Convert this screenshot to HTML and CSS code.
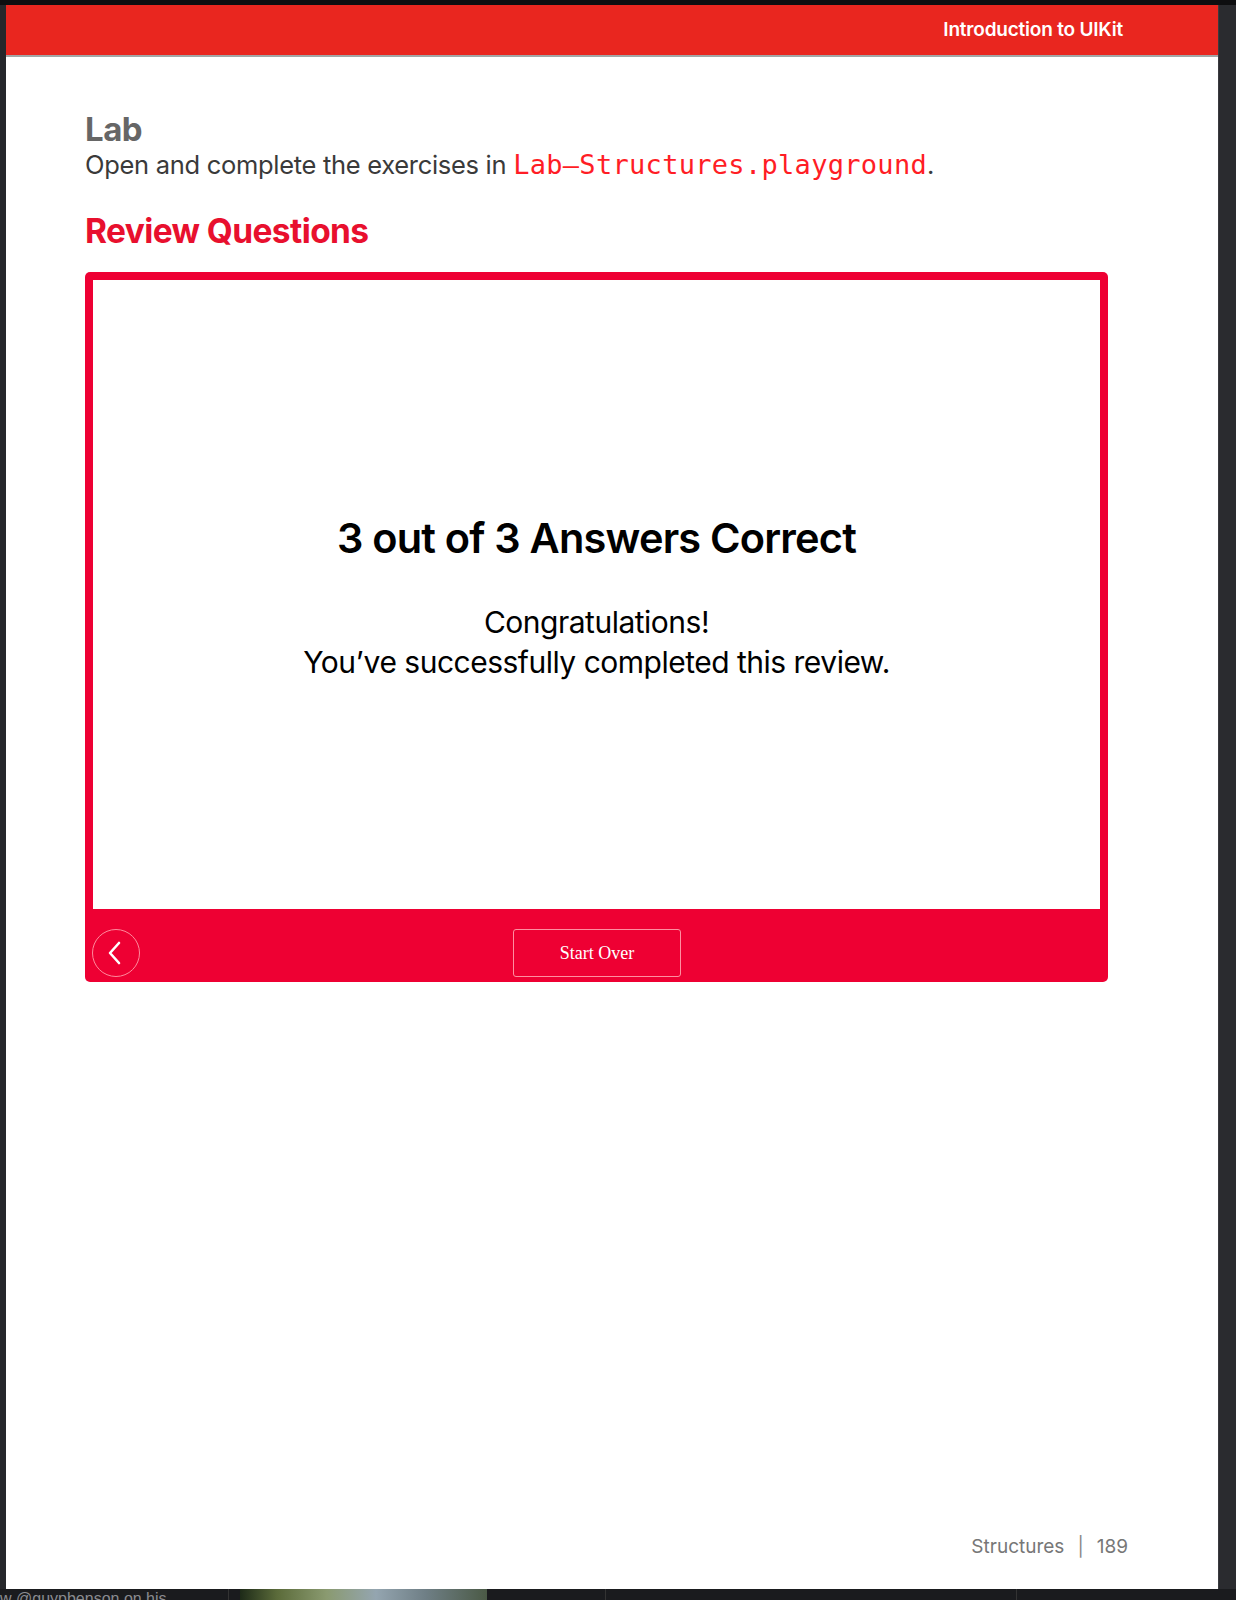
FILE: index.html
```html
<!DOCTYPE html>
<html lang="en">
<head>
<meta charset="utf-8">
<title>Structures - Review Questions</title>
<link rel="stylesheet" href="styles.css">
</head>
<body>
<div class="frame">
  <div class="topstrip"></div>
  <div class="middle">
    <div class="side-left"></div>
    <div class="page">
      <header class="page-header">
        <span class="header-title">Introduction to UIKit</span>
      </header>
      <main class="content">
        <h2 class="lab-title">Lab</h2>
        <p class="lab-text">Open and complete the exercises in <code class="code">Lab—Structures.playground</code>.</p>
        <h2 class="review-title">Review Questions</h2>
        <section class="quiz">
          <div class="quiz-body">
            <div class="score">3 out of 3 Answers Correct</div>
            <div class="message">Congratulations!<br>You’ve successfully completed this review.</div>
          </div>
          <div class="quiz-footer">
            <button class="back-btn" aria-label="Back">
              <svg width="20" height="24" viewBox="0 0 20 24"><path d="M14 2 L5 12 L14 22" fill="none" stroke="#fff" stroke-width="2.6" stroke-linecap="round" stroke-linejoin="round"/></svg>
            </button>
            <button class="start-btn">Start Over</button>
            <div class="spacer"></div>
          </div>
        </section>
      </main>
      <footer class="page-footer">
        <span>Structures</span><span class="sep">|</span><span>189</span>
      </footer>
    </div>
    <div class="side-right"></div>
  </div>
  <div class="bottombar">
    <span class="caption">w @guypbenson on his</span>
    <span class="divider"></span>
    <span class="thumb"></span>
    <span class="divider d2"></span>
    <span class="divider d3"></span>
  </div>
</div>
</body>
</html>
```

FILE: styles.css
```css
* { box-sizing: border-box; }
html, body { margin: 0; padding: 0; }
body {
  background: #1c1d20;
  font-family: "Inter", "Noto Sans", "Liberation Sans", sans-serif;
  width: 1236px;
  height: 1600px;
  overflow: hidden;
}
.frame {
  display: flex;
  flex-direction: column;
  height: 1600px;
}
.topstrip {
  height: 5px;
  background: #0e0e10;
}
.middle {
  display: flex;
  height: 1584px;
}
.side-left {
  width: 6px;
  background: #26272b;
}
.side-right {
  width: 18px;
  background: #2a2b2f;
  border-left: 1px solid #3a3b3f;
}
.page {
  width: 1212px;
  background: #fff;
  display: flex;
  flex-direction: column;
}
.page-header {
  height: 52px;
  background: #e9261f;
  border-bottom: 2px solid #a2a6a6;
  display: flex;
  align-items: center;
  justify-content: flex-end;
  padding: 0 95px 2px 0;
}
.header-title {
  color: #fff;
  font-weight: 600;
  font-size: 19px;
  letter-spacing: -0.2px;
}
.content {
  padding: 52px 0 0 79px;
  flex: 1;
}
.lab-title {
  margin: 0;
  font-size: 33px;
  font-weight: 700;
  color: #666;
  line-height: 40px;
  letter-spacing: -0.5px;
}
.lab-text {
  margin: 0;
  font-size: 25.5px;
  color: #3a3a3a;
  line-height: 32px;
  letter-spacing: -0.3px;
}
.code {
  font-family: "DejaVu Sans Mono", "Liberation Mono", monospace;
  color: #ff1d25;
  font-size: 27px;
  letter-spacing: 0.3px;
}
.review-title {
  margin: 30px 0 0;
  font-size: 33.5px;
  font-weight: 700;
  color: #e8102e;
  line-height: 40px;
  letter-spacing: -0.6px;
}
.quiz {
  margin-top: 21px;
  width: 1023px;
  background: #ee0033;
  border-radius: 5px;
  padding: 8px 8px 0;
}
.quiz-body {
  height: 629px;
  background: #fff;
  display: flex;
  flex-direction: column;
  align-items: center;
  justify-content: center;
  padding-top: 6px;
  text-align: center;
}
.score {
  font-size: 41.5px;
  font-weight: 600;
  color: #000;
  letter-spacing: -0.8px;
  line-height: 48px;
}
.message {
  margin-top: 40px;
  font-size: 30px;
  color: #000;
  line-height: 40px;
  letter-spacing: -0.5px;
}
.quiz-footer {
  height: 73px;
  display: flex;
  align-items: center;
  justify-content: space-between;
  padding: 15px 0 0 0;
  margin-left: -1px;
}
.back-btn {
  width: 48px;
  height: 48px;
  border-radius: 50%;
  border: 1.5px solid #ff8a9c;
  background: transparent;
  display: flex;
  align-items: center;
  justify-content: center;
  padding: 0 3px 0 0;
}
.start-btn {
  width: 168px;
  height: 48px;
  border: 1.5px solid #ff8fa0;
  border-radius: 3px;
  background: transparent;
  color: #fff;
  font-family: "Liberation Serif", "Times New Roman", serif;
  font-size: 18px;
  margin-left: 2px;
}
.spacer { width: 48px; }
.page-footer {
  height: 54px;
  display: flex;
  align-items: flex-start;
  justify-content: flex-end;
  padding: 0 90px 0 0;
  color: #777;
  font-size: 19px;
  gap: 13px;
}
.sep { color: #888; }
.bottombar {
  height: 11px;
  background: #1a1b1e;
  position: relative;
  overflow: hidden;
  display: flex;
  align-items: center;
}
.caption {
  color: #8a8b90;
  font-size: 16px;
  line-height: 11px;
  margin-top: 7px;
  font-family: "Liberation Sans", sans-serif;
  width: 228px;
  white-space: nowrap;
}
.divider {
  width: 1px;
  height: 11px;
  background: #333;
}
.thumb {
  width: 247px;
  height: 11px;
  margin-left: 11px;
  background: linear-gradient(90deg, #1d2a18 0%, #5b6b3a 15%, #8a9a70 35%, #94a5b0 55%, #6f7f86 75%, #4b5a46 100%);
}
.d2 { margin-left: 118px; }
.d3 { margin-left: 410px; }
```
